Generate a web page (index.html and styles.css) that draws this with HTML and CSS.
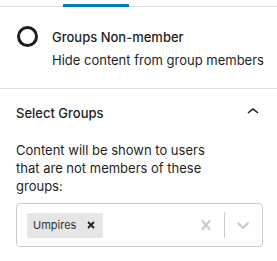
FILE: index.html
```html
<!DOCTYPE html>
<html>
<head>
<meta charset="utf-8">
<link rel="stylesheet" href="styles.css">
</head>
<body>
<div class="tabs"><div class="tab-active"></div></div>
<div class="card">
  <div class="card-row">
    <span class="radio"></span>
    <div class="card-text">
      <div class="card-title">Groups Non-member</div>
      <div class="card-desc">Hide content from group members</div>
    </div>
  </div>
</div>
<div class="panel">
  <div class="panel-head">
    <span class="panel-title">Select Groups</span>
    <svg class="chev-up" width="24" height="24" viewBox="0 0 24 24"><path d="M6.5 12.4L12 8l5.5 4.4-.9 1.2L12 10l-4.6 3.6-.9-1.2z" fill="#1e1e1e"/></svg>
  </div>
  <p class="help">Content will be shown to users that are not members of these groups:</p>
  <div class="select">
    <div class="values">
      <span class="tag"><span class="tag-label">Umpires</span><svg class="tag-x" width="8" height="8" viewBox="0 0 8 8"><path d="M1 1L7 7M7 1L1 7" stroke="#1e1e1e" stroke-width="1.8"/></svg></span>
    </div>
    <div class="indicators">
      <svg class="clear" width="20" height="20" viewBox="0 0 20 20"><path d="M14.348 14.849c-0.469 0.469-1.229 0.469-1.697 0l-2.651-3.030-2.651 3.029c-0.469 0.469-1.229 0.469-1.697 0-0.469-0.469-0.469-1.229 0-1.697l2.758-3.15-2.759-3.152c-0.469-0.469-0.469-1.228 0-1.697s1.228-0.469 1.697 0l2.652 3.031 2.651-3.031c0.469-0.469 1.228-0.469 1.697 0s0.469 1.229 0 1.697l-2.758 3.152 2.758 3.15c0.469 0.469 0.469 1.229 0 1.698z" fill="#cccccc"/></svg>
      <span class="sep"></span>
      <svg class="drop" width="20" height="20" viewBox="0 0 20 20"><path d="M4.516 7.548c0.436-0.446 1.043-0.481 1.576 0l3.908 3.747 3.908-3.747c0.533-0.481 1.141-0.446 1.574 0 0.436 0.445 0.408 1.197 0 1.615-0.406 0.418-4.695 4.502-4.695 4.502-0.217 0.223-0.502 0.335-0.787 0.335s-0.57-0.112-0.789-0.335c0 0-4.287-4.084-4.695-4.502s-0.436-1.17 0-1.615z" fill="#cccccc"/></svg>
    </div>
  </div>
</div>
</body>
</html>
```
FILE: styles.css
```css
* { box-sizing: border-box; }
html, body { margin: 0; padding: 0; background: #fff; }
body {
  width: 277px;
  font-family: Inter, "Noto Sans", "Liberation Sans", sans-serif;
  font-size: 13px;
  color: #1e1e1e;
  -webkit-font-smoothing: antialiased;
}
.tabs {
  height: 7px;
  border-bottom: 1px solid #e0e0e0;
  display: flex;
  align-items: flex-end;
}
.tab-active {
  margin-left: 63px;
  width: 66px;
  height: 3px;
  background: #007cba;
  margin-bottom: -1px;
}
.card {
  padding: 20px 0 19px 17px;
  border-bottom: 1px solid #e0e0e0;
}
.card-row {
  display: flex;
  gap: 14px;
}
.radio {
  flex: none;
  width: 21px;
  height: 21px;
  border: 3px solid #1e1e1e;
  border-radius: 50%;
  margin-top: -1px;
}
.card-text { white-space: nowrap; }
.card-title {
  line-height: 20px;
  font-weight: 500;
}
.card-desc {
  line-height: 18px;
  margin-top: 4px;
}
.panel {
  padding: 0 14px 0 16px;
}
.panel-head {
  display: flex;
  align-items: center;
  justify-content: space-between;
  height: 48px;
  padding-top: 0;
}
.panel-title {
  font-weight: 500;
}
.chev-up { margin-right: -2px; margin-top: -2px; }
.help {
  margin: 4px 0 0;
  line-height: 18px;
  width: 200px;
}
.select {
  margin-top: 8px;
  width: 247px;
  height: 44px;
  border: 1px solid #cccccc;
  border-radius: 4px;
  display: flex;
  align-items: center;
}
.values {
  flex: 1;
  padding-left: 10px;
  display: flex;
}
.tag {
  display: inline-flex;
  align-items: center;
  background: #e6e6e6;
  border-radius: 2px;
  height: 25px;
  padding: 0 8px 0 6px;
  gap: 11px;
  font-size: 11px;
  color: #333;
}
.tag-x { display: block; }
.indicators {
  display: flex;
  align-items: center;
  height: 100%;
}
.clear { margin-right: 8px; }
.sep {
  width: 1px;
  height: 26px;
  background: #cccccc;
}
.drop { margin: 0 9px 0 8px; }
```
